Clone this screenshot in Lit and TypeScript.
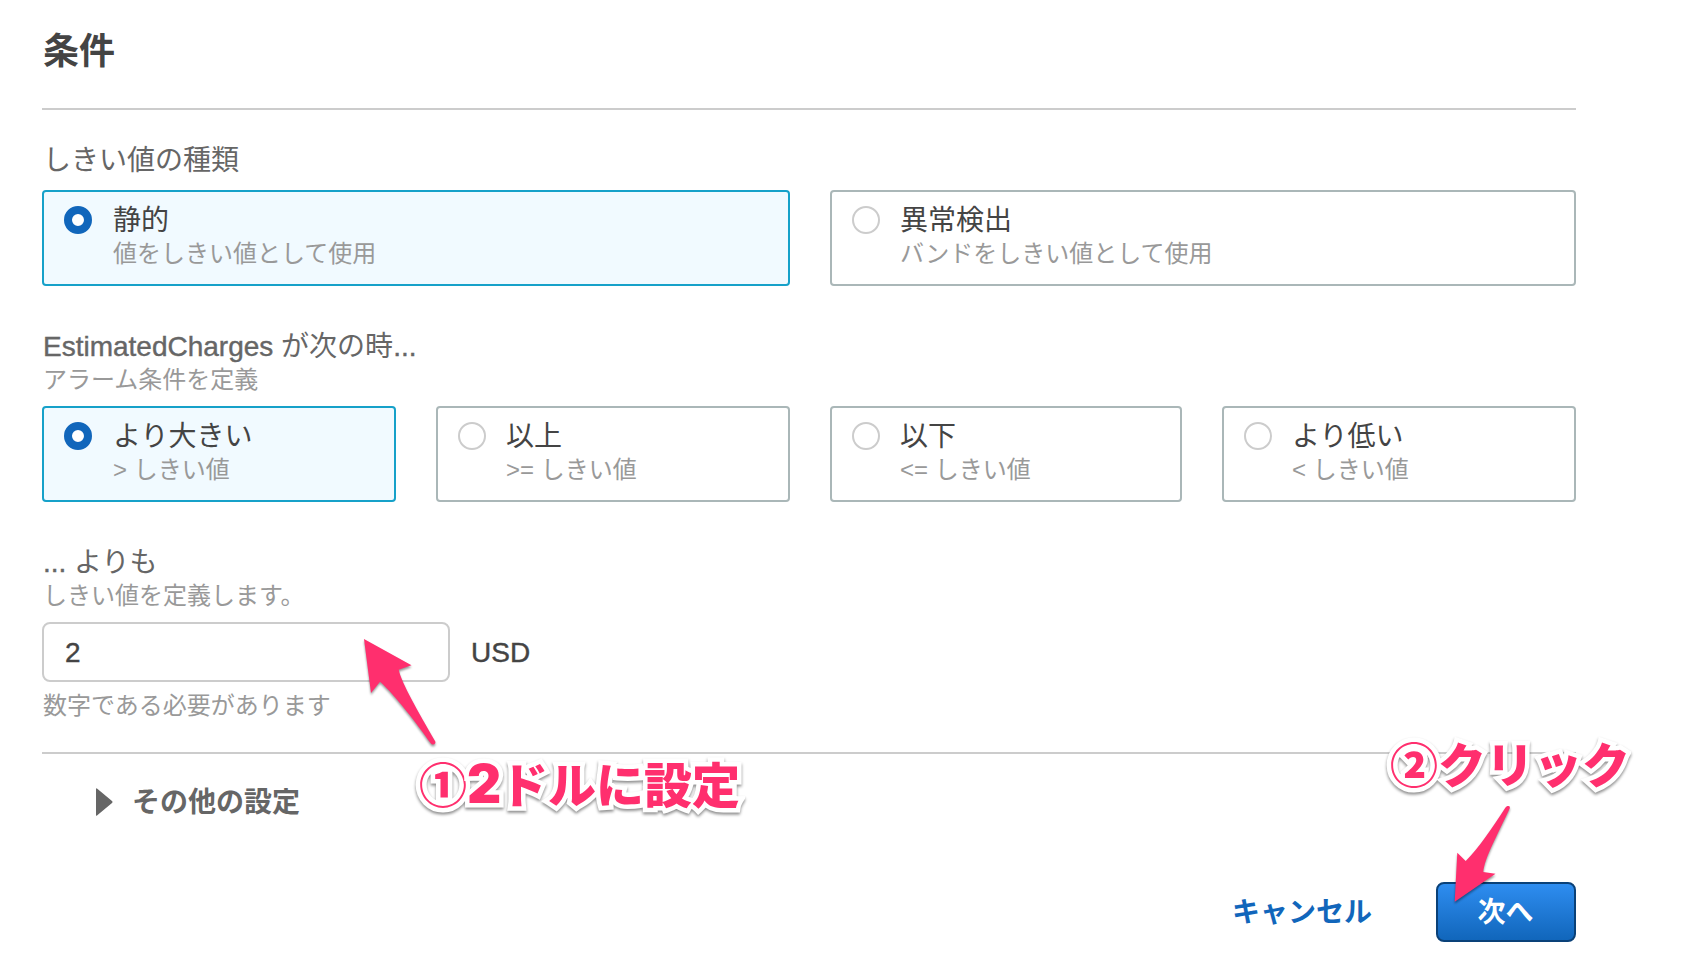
import { LitElement, html, css } from "lit";
import { customElement, property } from "lit/decorators.js";

interface Choice {
  label: string;
  hint: string;
  selected?: boolean;
}

const THRESHOLD_TYPES: Choice[] = [
  { label: "静的", hint: "値をしきい値として使用", selected: true },
  { label: "異常検出", hint: "バンドをしきい値として使用" },
];

const COMPARISONS: Choice[] = [
  { label: "より大きい", hint: "> しきい値", selected: true },
  { label: "以上", hint: ">= しきい値" },
  { label: "以下", hint: "<= しきい値" },
  { label: "より低い", hint: "< しきい値" },
];

@customElement("radio-tile")
class RadioTile extends LitElement {
  @property() label = "";
  @property() hint = "";
  @property({ type: Boolean, reflect: true }) selected = false;

  static styles = css`
    :host {
      display: flex;
      box-sizing: border-box;
      height: 96px;
      padding: 10px 20px 0;
      border: 2px solid #aab7b8;
      border-radius: 4px;
      background: #fff;
    }
    :host([selected]) {
      border-color: #16a1c9;
      background: #f1faff;
    }
    .dot {
      flex: none;
      box-sizing: border-box;
      width: 28px;
      height: 28px;
      margin: 4px 20px 0 0;
      border: 2px solid #ccc;
      border-radius: 50%;
      background: #fff;
    }
    :host([selected]) .dot {
      margin-right: 21px;
      border: 8px solid #1166bb;
    }
    .label {
      color: #444;
      font-size: 28px;
      line-height: 38px;
    }
    .hint {
      color: #999;
      font-size: 24px;
      line-height: 28px;
    }
  `;

  render() {
    return html`
      <div class="dot"></div>
      <div>
        <div class="label">${this.label}</div>
        <div class="hint">${this.hint}</div>
      </div>
    `;
  }
}

@customElement("app-root")
class AppRoot extends LitElement {
  static styles = css`
    :host {
      display: block;
      position: relative;
      box-sizing: border-box;
      width: 1692px;
      height: 968px;
      overflow: hidden;
      padding: 20px 116px 0 42px;
      background: #fff;
      color: #444;
      font-family: "Liberation Sans", "Noto Sans CJK JP", sans-serif;
      font-size: 28px;
    }
    .title {
      margin: 0;
      height: 88px;
      padding-left: 1px;
      box-sizing: border-box;
      font-size: 36px;
      font-weight: 700;
      line-height: 64px;
    }
    .rule {
      height: 2px;
      background: #ccc;
    }
    .label {
      padding-left: 1px;
      color: #666;
      line-height: 36px;
    }
    .latin {
      -webkit-text-stroke: 0.4px currentColor;
    }
    .help {
      padding-left: 1px;
      color: #999;
      font-size: 24px;
      line-height: 30px;
    }
    .types {
      margin-top: 33px;
    }
    .types .pair {
      margin-top: 11px;
    }
    .pair {
      display: grid;
      grid-template-columns: 748px 746px;
      column-gap: 40px;
    }
    .compare {
      margin-top: 43px;
    }
    .four {
      display: grid;
      grid-template-columns: 354px 354px 352px 354px;
      column-gap: 40px;
      margin-top: 11px;
    }
    .threshold {
      margin-top: 43px;
    }
    .entry {
      display: flex;
      align-items: center;
      gap: 20px;
      margin-top: 11px;
    }
    .field {
      box-sizing: border-box;
      width: 408px;
      height: 60px;
      margin: 0;
      padding: 1px 20px 0 21px;
      border: 2px solid #ccc;
      border-radius: 8px;
      background: #fff;
      color: #444;
      font: inherit;
    }
    .unit {
      padding: 1px 0 0 1px;
    }
    .note {
      margin: 9px 0 31px;
    }
    .more {
      display: flex;
      align-items: center;
      height: 36px;
      margin: 30px 0 0 54px;
      color: #666;
      font-weight: 700;
    }
    .more span {
      padding-bottom: 4px;
    }
    .caret {
      width: 17px;
      height: 28px;
      margin-right: 19px;
      fill: #666;
    }
    .actions {
      display: flex;
      justify-content: flex-end;
      align-items: center;
      margin-top: 62px;
      font-weight: 700;
    }
    .cancel {
      margin-right: 64px;
      padding-bottom: 4px;
      color: #1166bb;
    }
    .next {
      box-sizing: border-box;
      width: 140px;
      height: 60px;
      padding: 0 1px 4px 0;
      border: 2px solid #0a4178;
      border-radius: 8px;
      background: linear-gradient(#2e8df0, #1166bb);
      color: #fff;
      font: inherit;
    }
    .callout {
      position: absolute;
      color: #ff2f6e;
      font-size: 48px;
      font-weight: 900;
      line-height: 60px;
      white-space: nowrap;
      font-family: "Noto Sans CJK JP", sans-serif;
      -webkit-text-stroke: 9px #fff;
      paint-order: stroke fill;
      stroke-linejoin: round;
      filter: drop-shadow(0 2px 1.5px rgba(0, 0, 0, 0.45));
    }
    .callout.one {
      left: 419px;
      top: 752px;
    }
    .callout.two {
      left: 1390px;
      top: 732px;
    }
    .digit {
      display: inline-block;
      width: 33px;
      font-family: Inter, sans-serif;
      font-size: 53px;
      line-height: 48px;
    }
    .arrows {
      position: absolute;
      left: 0;
      top: 0;
      width: 1692px;
      height: 968px;
      pointer-events: none;
      fill: #ff2f6e;
      filter: drop-shadow(0 2px 1px rgba(0, 0, 0, 0.4));
    }
  `;

  private tiles(choices: Choice[]) {
    return choices.map(
      (c) => html`<radio-tile .label=${c.label} .hint=${c.hint} ?selected=${!!c.selected}></radio-tile>`
    );
  }

  render() {
    return html`
      <h2 class="title">条件</h2>
      <div class="rule"></div>

      <section class="types">
        <div class="label">しきい値の種類</div>
        <div class="pair">${this.tiles(THRESHOLD_TYPES)}</div>
      </section>

      <section class="compare">
        <div class="label"><span class="latin">EstimatedCharges</span> が次の時<span class="latin">...</span></div>
        <div class="help">アラーム条件を定義</div>
        <div class="four">${this.tiles(COMPARISONS)}</div>
      </section>

      <section class="threshold">
        <div class="label"><span class="latin">...</span> よりも</div>
        <div class="help">しきい値を定義します。</div>
        <div class="entry">
          <input class="field latin" .value=${"2"} />
          <span class="unit latin">USD</span>
        </div>
        <div class="help note">数字である必要があります</div>
      </section>

      <div class="rule"></div>
      <div class="more">
        <svg class="caret" viewBox="0 0 17 28">
          <path d="M0 1.2Q0 -.6 1.3 .8L16 13Q17 14 16 15L1.3 27.2Q0 28.6 0 26.8Z" />
        </svg>
        <span>その他の設定</span>
      </div>

      <div class="actions">
        <span class="cancel">キャンセル</span>
        <button class="next">次へ</button>
      </div>

      <div class="callout one">①<span class="digit">2</span>ドルに設定</div>
      <div class="callout two">②クリック</div>
      <svg class="arrows" viewBox="0 0 1692 968">
        <path
          d="M364 639L411.5 665.3L398.7 669.7C402 684 418 711 435.3 741.5Q436 744 433 744.5Q431.5 744.5 430.5 743C417 724 396 696 380 681.7L371 693Z"
        />
        <path
          d="M1454.7 901.7L1495.5 873.7L1483.3 872C1484.5 858 1497 836 1509.7 808.5Q1510.5 805.5 1507.5 806Q1506.5 806 1505.5 807.5C1492 828 1479 848 1465.7 861L1457.3 852.7Z"
        />
      </svg>
    `;
  }
}
